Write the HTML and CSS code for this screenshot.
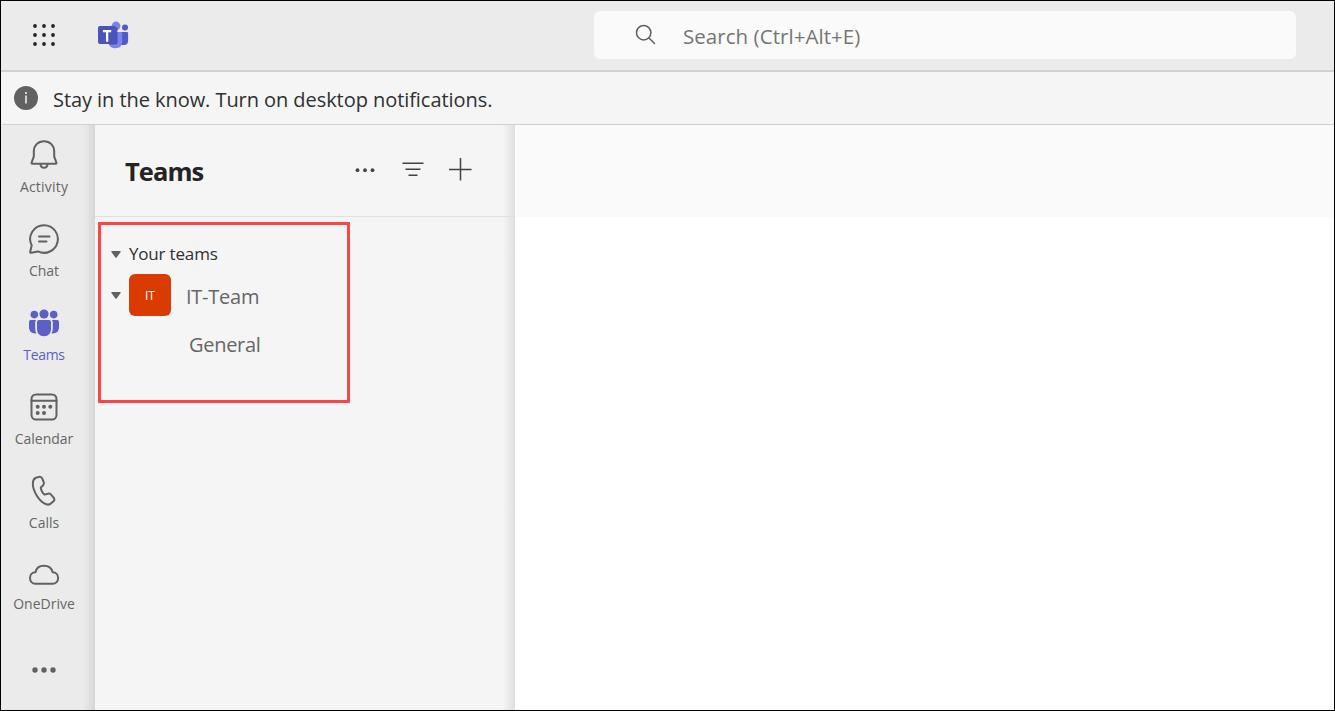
FILE: index.html
```html
<!DOCTYPE html>
<html lang="en">
<head>
<meta charset="utf-8">
<title>Teams</title>
<link rel="stylesheet" href="styles.css">
</head>
<body>
<div class="app">
  <header class="topbar">
    <svg class="waffle" width="24" height="24" viewBox="0 0 24 24"><g fill="#242424"><circle cx="3" cy="3" r="1.9"/><circle cx="12" cy="3" r="1.9"/><circle cx="21" cy="3" r="1.9"/><circle cx="3" cy="12" r="1.9"/><circle cx="12" cy="12" r="1.9"/><circle cx="21" cy="12" r="1.9"/><circle cx="3" cy="21" r="1.9"/><circle cx="12" cy="21" r="1.9"/><circle cx="21" cy="21" r="1.9"/></g></svg>
    <svg class="logo" width="32" height="28" viewBox="0 0 32 28">
      <circle cx="27" cy="6.5" r="3" fill="#5059c9"/>
      <path d="M20 11h8.800q1.300 0 1.300 1.300v7.200q0 4.500-4.500 4.500h-3z" fill="#5059c9"/>
      <circle cx="18" cy="5" r="4.400" fill="#7b83eb"/>
      <path d="M11 11h12q1.200 0 1.200 1.200v8q0 7-7 7-5 0-6.200-4z" fill="#7b83eb"/>
      <path d="M14 6h3.500q2 0 2 2v13.500q0 2-2 2H11V11h3z" fill="#3d4292" opacity=".75"/>
      <rect x="0" y="5" width="18" height="18" rx="2" fill="#4b53bc"/>
      <path d="M5 10.200h8.200M9.100 10v10.800" stroke="#fff" stroke-width="2.300" fill="none"/>
    </svg>
    <div class="search">
      <svg width="22" height="22" viewBox="0 0 22 22" fill="none" stroke="#616161" stroke-width="1.500" stroke-linecap="round"><circle cx="8.700" cy="8.700" r="7.200"/><path d="M14 14l5.500 5.500"/></svg>
      <span class="search-label">Search (Ctrl+Alt+E)</span>
    </div>
  </header>
  <div class="notice">
    <svg width="24" height="24" viewBox="0 0 24 24"><circle cx="12" cy="12" r="12" fill="#616161"/><path d="M12 9.500v8" stroke="#f5f5f5" stroke-width="1.500"/><circle cx="12" cy="7" r="1" fill="#f5f5f5"/></svg>
    <span class="notice-text">Stay in the know. Turn on desktop notifications.</span>
  </div>
  <div class="body">
    <nav class="rail">
      <div class="item"><svg width="32" height="32" viewBox="0 0 32 32"><path d="M16 2.200C10 2.200 5.800 6.700 5.800 12.500v5.200L3.600 23.600q-.4 1.200.8 1.200h23.200q1.200 0 .8-1.200l-2.200-5.900v-5.200C26.200 6.700 22 2.200 16 2.200zM12.500 25q0 3.800 3.500 3.800t3.500-3.800"/></svg><span class="l-activity">Activity</span></div>
      <div class="item"><svg width="32" height="32" viewBox="0 0 32 32"><path d="M16.200 2.200A13.800 13.800 0 1 1 10 28.400L3.200 29.800Q1.900 30 2.200 28.700L3.700 22.300A13.800 13.800 0 0 1 16.200 2.200zM11 13.500h10.500M11 18.500h7.500"/></svg><span>Chat</span></div>
      <div class="item active"><svg width="32" height="32" viewBox="0 0 32 32"><circle cx="6.300" cy="7.600" r="3.800"/><circle cx="25.700" cy="7.600" r="3.800"/><circle cx="16" cy="7" r="4.600"/><path d="M2.800 13H8q-.8 1-.8 2.500v6.200q0 2.500 1.200 4.800Q1 27 1 20v-5.200Q1 13 2.800 13zM29.200 13H24q.8 1 .8 2.500v6.200q0 2.500-1.200 4.800Q31 27 31 20v-5.200Q31 13 29.200 13zM11 13h10q2 0 2 2v7q0 7.200-7 7.200T9 22v-7q0-2 2-2z"/></svg><span class="l-teams">Teams</span></div>
      <div class="item"><svg width="32" height="32" viewBox="0 0 32 32"><rect x="3.500" y="3.500" width="25" height="25" rx="4.500"/><path d="M3.500 9.800h25"/><g class="fill"><circle cx="9.700" cy="15.800" r="2"/><circle cx="16" cy="15.800" r="2"/><circle cx="22.300" cy="15.800" r="2"/><circle cx="9.700" cy="22" r="2"/><circle cx="16" cy="22" r="2"/></g></svg><span>Calendar</span></div>
      <div class="item"><svg width="32" height="32" viewBox="0 0 32 32"><path d="M8 2.700L11 1.900Q13.300 1.400 14.300 3.700L15.700 7Q16.500 9 14.900 10.500L12.800 12.500C12.400 14 14.800 18.500 16.600 19.600L19.800 18.700Q22 18 23.300 19.800L25.800 22.800Q27.100 24.700 25.500 26.300L23.200 28.300Q21.200 30.300 18.300 29.300C11.200 26.800 4.200 15.300 4.900 7.700Q5.200 3.700 8 2.700z"/></svg><span>Calls</span></div>
      <div class="item drive"><svg width="32" height="32" viewBox="0 0 32 32"><path d="M7.500 13.300C8.300 9.200 11.600 6.800 15.800 6.800S23.700 9.200 24.700 13.300C28 13.300 30.100 15.700 30.100 18.900S27.800 24.700 24.700 24.700H7.400C4.200 24.700 2 22.100 2 18.900S4.200 13.300 7.500 13.300z"/></svg><span>OneDrive</span></div>
      <div class="item more"><svg width="26" height="8" viewBox="0 0 26 8"><g class="fill"><circle cx="4" cy="4" r="2.700"/><circle cx="13" cy="4" r="2.700"/><circle cx="22" cy="4" r="2.700"/></g></svg></div>
    </nav>
    <aside class="panel">
      <div class="panel-head">
        <h1>Teams</h1>
        <svg class="tools" width="120" height="24" viewBox="0 0 120 24" fill="none" stroke="#424242" stroke-width="1.500"><g fill="#424242" stroke="none"><circle cx="3.500" cy="12.200" r="1.900"/><circle cx="11" cy="12.200" r="1.900"/><circle cx="18.500" cy="12.200" r="1.900"/></g><path d="M48.500 5.200h21M51.500 11.200h15M54.500 17.200h9M95 11.500h22.500M106.500 0v22.500"/></svg>
      </div>
      <div class="teams">
        <div class="group"><svg class="caret" width="10" height="7" viewBox="0 0 10 7"><path d="M1 0h8q1 .2.600 1L5.600 6.600q-.6.500-1.200 0L.4 1Q0 .2 1 0z"/></svg><span class="yours">Your teams</span></div>
        <div class="team"><svg class="caret" width="10" height="7" viewBox="0 0 10 7"><path d="M1 0h8q1 .2.600 1L5.600 6.600q-.6.500-1.200 0L.4 1Q0 .2 1 0z"/></svg><span class="avatar">IT</span><span class="team-name">IT-Team</span></div>
        <div class="channel">General</div>
      </div>
    </aside>
    <main class="content"><div class="content-head"></div></main>
  </div>
</div>
</body>
</html>
```
FILE: styles.css
```css
* { box-sizing: border-box; }
body { margin: 0; font-family: "Open Sans", "Noto Sans", sans-serif; color: #303030; }
svg { display: block; flex: none; }
span, h1, .channel { white-space: nowrap; }
.app { width: 1335px; height: 711px; border: 1px solid #000; display: flex; flex-direction: column; overflow: hidden; background: #fff; }
.topbar { height: 71px; flex: none; display: flex; align-items: flex-start; background: linear-gradient(#efe8ee 0, #ebebeb 4px); border-bottom: 2px solid #d1d1d1; }
.waffle { margin: 22px 0 0 31px; }
.logo { margin: 20px 0 0 42px; }
.search { margin: 10px 0 0 464px; width: 702px; height: 48px; border-radius: 6px; background: #fafafa; display: flex; align-items: center; padding-left: 41px; }
.search-label { margin: 2px 0 0 26px; font-size: 20.5px; line-height: 28px; color: #757575; letter-spacing: .05px; }
.notice { height: 53px; flex: none; display: flex; align-items: center; padding-left: 13px; background: #f5f5f5; border-bottom: 1px solid #d1d1d1; }
.notice-text { margin: 3px 0 0 15px; font-size: 20px; line-height: 28px; letter-spacing: -.06px; }
.body { flex: 1; display: flex; min-height: 0; }
.rail { width: 94px; flex: none; padding-right: 8px; background: linear-gradient(90deg, #ebebeb 82px, #e3e3e3 87px, #d6d6d6 94px); color: #666; }
.item { height: 84px; padding-top: 14px; display: flex; flex-direction: column; align-items: center; font-size: 14px; line-height: 20px; }
.item svg { fill: none; stroke: #616161; stroke-width: 2; stroke-linejoin: round; stroke-linecap: round; }
.item span { margin-top: 6px; }
.item .l-activity { letter-spacing: .2px; }
.item .l-teams { letter-spacing: -.3px; }
.item .fill { fill: #616161; stroke: none; }
.item.active { color: #5b5fc7; }
.item.active svg { fill: #5b5fc7; stroke: none; }
.item.drive span { margin-top: 3px; }
.item.more { padding-top: 37px; }
.panel { width: 420px; flex: none; background: linear-gradient(90deg, #f5f5f5 408px, #ececec 413px, #dfdfdf 420px); }
.panel-head { height: 92px; border-bottom: 1px solid #e0e0e0; display: flex; align-items: flex-start; padding-left: 30px; }
.panel-head h1 { margin: 28px 0 0; width: 229px; font-size: 25.5px; line-height: 36px; font-weight: 700; letter-spacing: -.95px; color: #242424; }
.tools { margin-top: 33px; }
.teams { width: 252px; height: 181px; margin: 5px 0 0 3px; border: 3px solid #fc4547; padding: 18px 0 0 10px; }
.group, .team { display: flex; align-items: center; }
.group { height: 22px; margin-bottom: 9px; }
.caret { fill: #616161; }
.yours { margin-left: 8px; font-size: 17px; line-height: 22px; letter-spacing: -.18px; }
.team { height: 42px; }
.avatar { width: 42px; height: 42px; margin-left: 8px; border-radius: 6px; background: #da3b01; color: #fff; font-size: 12px; line-height: 43px; text-align: center; }
.team-name { margin: 3px 0 0 15px; font-size: 20px; line-height: 28px; color: #666; letter-spacing: -.25px; }
.channel { margin: 15px 0 0 78px; font-size: 20px; line-height: 28px; color: #666; letter-spacing: -.3px; }
.content { flex: 1; background: #fff; }
.content-head { height: 92px; background: #fafafa; }
```
